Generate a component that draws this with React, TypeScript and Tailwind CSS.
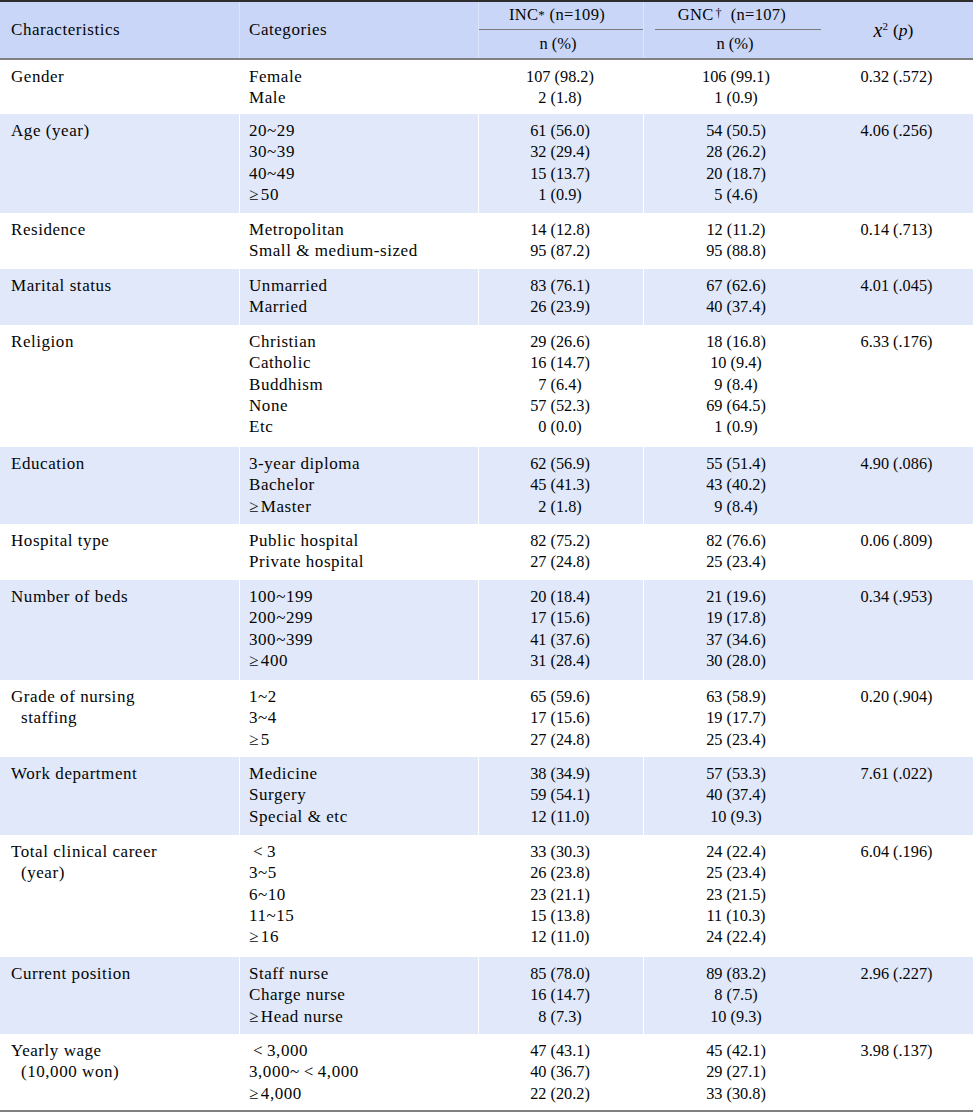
import React from "react";

type Row = {
  label: string[];
  cats: string[];
  inc: string[];
  gnc: string[];
  chi: string;
  h: number;
};

const G = "≥\u200A";

const rows: Row[] = [
  { label: ["Gender"], cats: ["Female", "Male"], inc: ["107 (98.2)", "2 (1.8)"], gnc: ["106 (99.1)", "1 (0.9)"], chi: "0.32 (.572)", h: 54 },
  { label: ["Age (year)"], cats: ["20~29", "30~39", "40~49", G + "50"], inc: ["61 (56.0)", "32 (29.4)", "15 (13.7)", "1 (0.9)"], gnc: ["54 (50.5)", "28 (26.2)", "20 (18.7)", "5 (4.6)"], chi: "4.06 (.256)", h: 99 },
  { label: ["Residence"], cats: ["Metropolitan", "Small & medium-sized"], inc: ["14 (12.8)", "95 (87.2)"], gnc: ["12 (11.2)", "95 (88.8)"], chi: "0.14 (.713)", h: 56 },
  { label: ["Marital status"], cats: ["Unmarried", "Married"], inc: ["83 (76.1)", "26 (23.9)"], gnc: ["67 (62.6)", "40 (37.4)"], chi: "4.01 (.045)", h: 56 },
  { label: ["Religion"], cats: ["Christian", "Catholic", "Buddhism", "None", "Etc"], inc: ["29 (26.6)", "16 (14.7)", "7 (6.4)", "57 (52.3)", "0 (0.0)"], gnc: ["18 (16.8)", "10 (9.4)", "9 (8.4)", "69 (64.5)", "1 (0.9)"], chi: "6.33 (.176)", h: 122 },
  { label: ["Education"], cats: ["3-year diploma", "Bachelor", G + "Master"], inc: ["62 (56.9)", "45 (41.3)", "2 (1.8)"], gnc: ["55 (51.4)", "43 (40.2)", "9 (8.4)"], chi: "4.90 (.086)", h: 77 },
  { label: ["Hospital type"], cats: ["Public hospital", "Private hospital"], inc: ["82 (75.2)", "27 (24.8)"], gnc: ["82 (76.6)", "25 (23.4)"], chi: "0.06 (.809)", h: 56 },
  { label: ["Number of beds"], cats: ["100~199", "200~299", "300~399", G + "400"], inc: ["20 (18.4)", "17 (15.6)", "41 (37.6)", "31 (28.4)"], gnc: ["21 (19.6)", "19 (17.8)", "37 (34.6)", "30 (28.0)"], chi: "0.34 (.953)", h: 100 },
  { label: ["Grade of nursing", "staffing"], cats: ["1~2", "3~4", G + "5"], inc: ["65 (59.6)", "17 (15.6)", "27 (24.8)"], gnc: ["63 (58.9)", "19 (17.7)", "25 (23.4)"], chi: "0.20 (.904)", h: 77 },
  { label: ["Work department"], cats: ["Medicine", "Surgery", "Special & etc"], inc: ["38 (34.9)", "59 (54.1)", "12 (11.0)"], gnc: ["57 (53.3)", "40 (37.4)", "10 (9.3)"], chi: "7.61 (.022)", h: 78 },
  { label: ["Total clinical career", "(year)"], cats: ["\u2009<\u20093", "3~5", "6~10", "11~15", G + "16"], inc: ["33 (30.3)", "26 (23.8)", "23 (21.1)", "15 (13.8)", "12 (11.0)"], gnc: ["24 (22.4)", "25 (23.4)", "23 (21.5)", "11 (10.3)", "24 (22.4)"], chi: "6.04 (.196)", h: 122 },
  { label: ["Current position"], cats: ["Staff nurse", "Charge nurse", G + "Head nurse"], inc: ["85 (78.0)", "16 (14.7)", "8 (7.3)"], gnc: ["89 (83.2)", "8 (7.5)", "10 (9.3)"], chi: "2.96 (.227)", h: 77 },
  { label: ["Yearly wage", "(10,000 won)"], cats: ["\u2009<\u20093,000", "3,000~\u2009<\u20094,000", G + "4,000"], inc: ["47 (43.1)", "40 (36.7)", "22 (20.2)"], gnc: ["45 (42.1)", "29 (27.1)", "33 (30.8)"], chi: "3.98 (.137)", h: 76 },
];

const grid = "grid grid-cols-[240px_239px_165px_186px_143px]";

function Lines({ items, indent }: { items: string[]; indent?: boolean }) {
  return (
    <>
      {items.map((t, i) => (
        <div key={i} className={indent && i > 0 ? "pl-[10px]" : ""}>
          {t}
        </div>
      ))}
    </>
  );
}

export default function App() {
  return (
    <div
      className="w-[973px] bg-white text-[#050505]"
      style={{ fontFamily: '"Liberation Serif", "Times New Roman", serif' }}
    >
      <div className="border-t-2 border-[#2e2e2e]">
        {/* header */}
        <div className={`${grid} grid-rows-[28px_28px] bg-[#c9d6f7] border-b-2 border-[#808080]`}>
          <div className="row-span-2 border-r border-[#dce4fa] flex items-center pl-[11px] text-[17px] tracking-[0.55px]">
            Characteristics
          </div>
          <div className="row-span-2 border-r border-[#dce4fa] flex items-center pl-[9px] text-[17px] tracking-[0.55px]">
            Categories
          </div>
          <div className="border-r border-[#dce4fa] flex flex-col">
            <div className="flex-1 flex items-center justify-center text-[16.5px] pr-[8px] tracking-[0.3px]">
              INC<sup className="text-[13px] relative -top-[1px]">*</sup>&nbsp;(n=109)
            </div>
            <div className="h-px bg-[#7a7a7a]"></div>
          </div>
          <div className="flex flex-col">
            <div className="flex-1 flex items-center justify-center text-[16.5px] pr-[10px] tracking-[0.3px]">
              GNC<sup className="text-[12px] relative -top-[3px] ml-[2px]">†</sup>&nbsp;&nbsp;(n=107)
            </div>
            <div className="h-px bg-[#7a7a7a] ml-[11px] mr-[9px]"></div>
          </div>
          <div className="row-span-2 flex items-center justify-center text-[17.5px] pr-[16px]">
            <span className="italic text-[20px]">x</span>
            <sup className="text-[11px] relative -top-[4px]">2</sup>
            <span className="ml-[5px]">(</span>
            <span className="italic">p</span>
            <span>)</span>
          </div>
          <div className="border-r border-[#dce4fa] flex items-center justify-center text-[16.5px] pr-[6px]">
            n (%)
          </div>
          <div className="flex items-center justify-center text-[16.5px] pr-[4px]">n (%)</div>
        </div>

        {/* body */}
        {rows.map((r, i) => (
          <div
            key={i}
            className={`${grid} ${i % 2 === 1 ? "bg-[#e0e8fa]" : "bg-white"} leading-[21.25px]`}
            style={{ height: r.h }}
          >
            <div className="border-r border-white pl-[11px] pt-[6px] text-[17px] tracking-[0.55px]">
              <Lines items={r.label} indent />
            </div>
            <div className="border-r border-white pl-[9px] pt-[6px] text-[17px] tracking-[0.55px]">
              <Lines items={r.cats} />
            </div>
            <div className="border-r border-white pt-[6px] text-center text-[16.3px] pr-[2px]">
              <Lines items={r.inc} />
            </div>
            <div className="pt-[6px] text-center text-[16.3px] pr-[2px]">
              <Lines items={r.gnc} />
            </div>
            <div className="pt-[6px] text-center text-[16.3px] pr-[10px]">{r.chi}</div>
          </div>
        ))}
        <div className="border-t-2 border-[#808080]"></div>
      </div>
    </div>
  );
}
